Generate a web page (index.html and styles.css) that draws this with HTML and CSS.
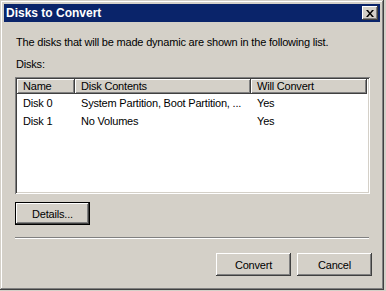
FILE: index.html
```html
<!DOCTYPE html>
<html lang="en">
<head>
    <meta charset="UTF-8">
    <title>Disks to Convert</title>
    <link rel="stylesheet" href="styles.css">
</head>
<body>
    <div class="window">
        <div class="titlebar">
            <span class="title">Disks to Convert</span>
            <span class="close">
                <svg width="8" height="7" viewBox="0 0 8 7">
                    <path d="M0 0h2l2 2.5 2-2.5h2l-3 3.5 3 3.5h-2l-2-2.5-2 2.5h-2l3-3.5z" fill="#000"/>
                </svg>
            </span>
        </div>

        <div class="content">
            <p class="intro">The disks that will be made dynamic are shown in the following list.</p>
            <p class="label">Disks:</p>

            <div class="listview">
                <div class="row head">
                    <span class="col name">Name</span>
                    <span class="col contents">Disk Contents</span>
                    <span class="col convert">Will Convert</span>
                </div>
                <div class="row">
                    <span class="col name">Disk 0</span>
                    <span class="col contents">System Partition, Boot Partition, ...</span>
                    <span class="col convert">Yes</span>
                </div>
                <div class="row">
                    <span class="col name">Disk 1</span>
                    <span class="col contents">No Volumes</span>
                    <span class="col convert">Yes</span>
                </div>
            </div>

            <button class="btn default">Details...</button>

            <div class="separator"></div>

            <div class="actions">
                <button class="btn">Convert</button>
                <button class="btn">Cancel</button>
            </div>
        </div>
    </div>
</body>
</html>
```

FILE: styles.css
```css
* { margin: 0; padding: 0; box-sizing: border-box; }
body {
    font-family: 'Liberation Sans', Arial, sans-serif;
    font-size: 11px;
    letter-spacing: -0.2px;
    background: #d4d0c8;
    color: #000;
}
.window {
    width: 384px;
    height: 290px;
    padding: 4px;
    background: #d4d0c8;
    box-shadow: inset -1px -1px #404040, inset 1px 1px #d4d0c8,
                inset -2px -2px #808080, inset 2px 2px #fff;
}
.titlebar {
    height: 18px;
    display: flex;
    align-items: center;
    justify-content: space-between;
    padding: 0 2px 0 2px;
    background: #0a246a;
    color: #fff;
    font-size: 12px;
    font-weight: bold;
    letter-spacing: 0;
}
.close {
    width: 16px;
    height: 14px;
    display: flex;
    align-items: center;
    justify-content: center;
    background: #d4d0c8;
    box-shadow: inset -1px -1px #404040, inset 1px 1px #fff,
                inset -2px -2px #808080;
}
.content {
    padding: 0 8px 0 11px;
}
.intro {
    margin: 14px 0 0 1px;
    line-height: 13px;
}
.label {
    margin: 9px 0 0 1px;
    line-height: 13px;
}
.listview {
    margin-top: 6px;
    width: 355px;
    height: 117px;
    padding: 2px;
    background: #fff;
    box-shadow: inset 1px 1px #808080, inset -1px -1px #fff,
                inset 2px 2px #404040, inset -2px -2px #d4d0c8;
}
.row {
    display: flex;
    height: 18px;
    line-height: 18px;
}
.row.head {
    height: 15px;
    background: #d4d0c8;
    width: 350px;
}
.col { padding-left: 6px; white-space: nowrap; }
.name { width: 58px; }
.contents { width: 176px; }
.convert { width: 116px; }
.head .col {
    height: 15px;
    line-height: 14px;
    box-shadow: inset -1px -1px #404040, inset 1px 1px #fff,
                inset -2px -2px #808080;
}
.btn {
    font-family: inherit;
    font-size: 11px;
    letter-spacing: -0.2px;
    width: 75px;
    height: 23px;
    background: #d4d0c8;
    border: none;
    color: #000;
    box-shadow: inset -1px -1px #404040, inset 1px 1px #fff,
                inset -2px -2px #808080;
}
.btn.default {
    margin-top: 8px;
    box-shadow: inset 0 0 0 1px #000, inset -2px -2px #404040,
                inset 2px 2px #fff, inset -3px -3px #808080;
}
.separator {
    margin-top: 12px;
    width: 354px;
    height: 2px;
    border-top: 1px solid #808080;
    border-bottom: 1px solid #fff;
}
.actions {
    margin-top: 14px;
    display: flex;
    justify-content: flex-end;
    gap: 6px;
}
```
